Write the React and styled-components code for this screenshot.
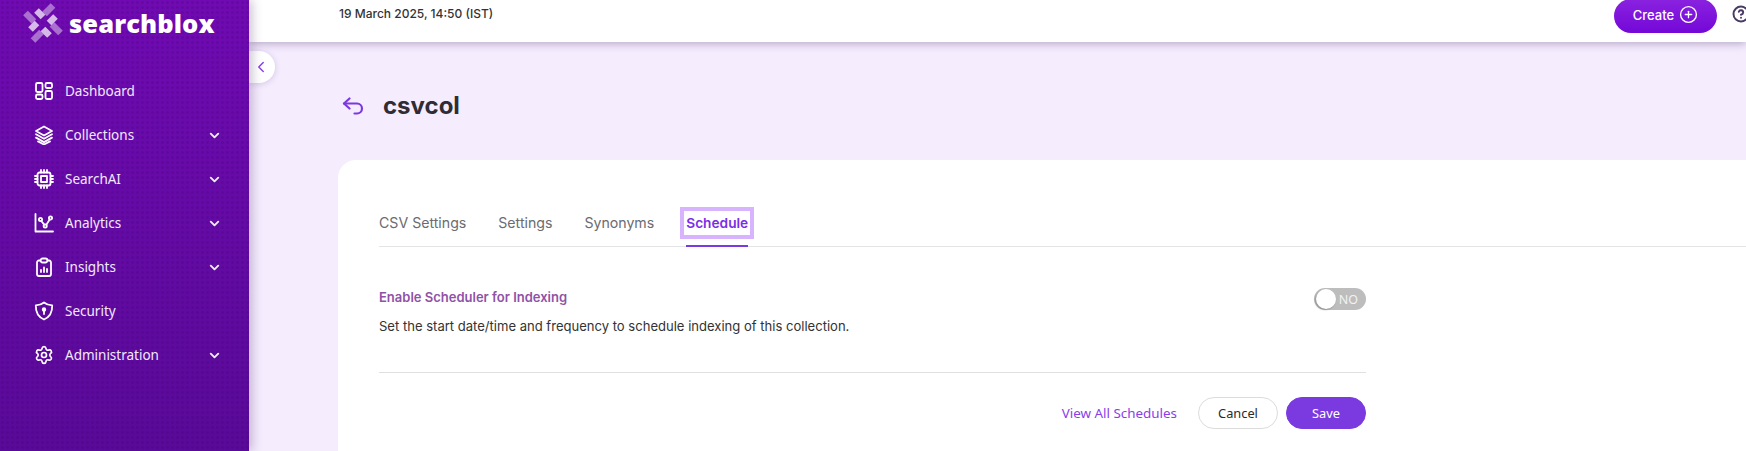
import React from 'react';
import styled, { createGlobalStyle } from 'styled-components';
import { ChevronDown, ChevronLeft, CirclePlus, CircleHelp, Settings } from 'lucide-react';

const Global = createGlobalStyle`
  html, body { margin: 0; padding: 0; height: 451px; overflow: hidden; background: #f5ecfe; }
  #root { height: 451px; }
  * { box-sizing: border-box; }
`;

const Shell = styled.div`
  display: flex;
  width: 1746px;
  height: 451px;
  overflow: hidden;
  font-family: Inter, "Liberation Sans", sans-serif;
`;

const Sidebar = styled.aside`
  position: relative;
  z-index: 3;
  flex: 0 0 249px;
  background-color: #650aa6;
  background-image:
    radial-gradient(circle at center, rgba(60, 0, 110, 0.2) 1.2px, transparent 1.6px),
    linear-gradient(180deg, #700ab2 0%, #590a98 100%);
  background-size: 5px 5px, 100% 100%;
  box-shadow: 3px 0 10px rgba(60, 30, 90, 0.28);
`;

const Brand = styled.div`
  display: flex;
  align-items: center;
  gap: 6px;
  height: 46px;
  padding-left: 23px;
`;

const BrandName = styled.span`
  font-family: "Open Sans", sans-serif;
  font-weight: 800;
  font-size: 25.5px;
  letter-spacing: 0.1px;
  line-height: 44px;
  color: #fff;
`;

const NavList = styled.nav`
  display: flex;
  flex-direction: column;
  padding-top: 23px;
`;

const NavRow = styled.div`
  display: flex;
  align-items: center;
  height: 44px;
  padding: 0 27px 0 34px;
  color: #fff;
`;

const NavIcon = styled.svg`
  flex: 0 0 20px;
  width: 20px;
  height: 20px;
  fill: none;
  stroke: #fff;
  stroke-width: 1.8;
  stroke-linecap: round;
  stroke-linejoin: round;
`;

const NavLabel = styled.span`
  flex: 1;
  margin-left: 11px;
  font-family: "Noto Sans", sans-serif;
  font-size: 13.5px;
  line-height: 20px;
  color: #f3e9fc;
`;

const Main = styled.div`
  flex: 1;
  min-width: 0;
  display: flex;
  flex-direction: column;
  position: relative;
`;

const Header = styled.header`
  position: relative;
  z-index: 2;
  flex: 0 0 42px;
  display: flex;
  align-items: flex-start;
  background: #fff;
  padding-left: 90px;
  box-shadow: 0 2px 8px rgba(70, 50, 100, 0.35);
`;

const DateText = styled.span`
  margin-top: 6px;
  font-size: 12px;
  font-weight: 500;
  line-height: 16px;
  color: #333;
`;

const HeaderActions = styled.div`
  margin-left: auto;
  margin-right: -4px;
  display: flex;
  align-items: flex-start;
  gap: 15px;
`;

const CreateButton = styled.button`
  display: flex;
  align-items: center;
  justify-content: center;
  gap: 5px;
  width: 103px;
  height: 34px;
  margin-top: -1px;
  border: 0;
  padding: 0 0 3px;
  border-radius: 17px;
  background: linear-gradient(180deg, #8a22df 0%, #7408d8 100%);
  color: #fff;
  font-family: Inter, sans-serif;
  font-size: 13px;
  font-weight: 500;
`;

const HelpSlot = styled.span`
  display: flex;
  margin-top: 5px;
  color: #4a3a66;
`;

const CollapseTab = styled.button`
  position: absolute;
  z-index: 1;
  left: 0;
  top: 51px;
  width: 26px;
  height: 32px;
  display: flex;
  align-items: center;
  justify-content: center;
  padding: 0 3px 0 0;
  border: 0;
  border-radius: 0 16px 16px 0;
  background: #fff;
  color: #8a3ee8;
  box-shadow: 0 1px 6px rgba(80, 50, 120, 0.2);
`;

const Content = styled.main`
  flex: 1;
  display: flex;
  flex-direction: column;
  padding-left: 89px;
`;

const TitleRow = styled.div`
  flex: 0 0 118px;
  display: flex;
  align-items: center;
  gap: 19px;
  padding: 10px 0 0 4px;
`;

const BackIcon = styled.svg`
  width: 22px;
  height: 18px;
  fill: none;
  stroke: #7b3ae0;
  stroke-width: 2.2;
  stroke-linecap: round;
  stroke-linejoin: round;
`;

const Title = styled.h1`
  margin: 0;
  font-size: 24px;
  font-weight: 700;
  line-height: 30px;
  color: #2f2d33;
`;

const Card = styled.section`
  flex: 1;
  margin-right: -40px;
  padding: 47px 0 0 41px;
  background: #fff;
  border-radius: 18px 0 0 0;
`;

const Tabs = styled.div`
  display: flex;
  gap: 32px;
  height: 40px;
  border-bottom: 1px solid #e4e4e6;
`;

const Tab = styled.button`
  display: flex;
  align-items: flex-start;
  height: 40px;
  padding: 6px 0 0;
  border: 0;
  border-bottom: 2px solid ${p => (p.$active ? '#7b3ae0' : 'transparent')};
  background: none;
  font-family: Inter, sans-serif;
  font-size: ${p => (p.$active ? '13.7px' : '14.15px')};
  font-weight: ${p => (p.$active ? 600 : 400)};
  color: ${p => (p.$active ? '#7b2fe6' : '#6b6b70')};
`;

const TabLabel = styled.span`
  display: block;
  height: 20px;
  line-height: 20px;
  outline: ${p => (p.$focus ? '4px solid #d8b4fe' : 'none')};
  outline-offset: 2px;
`;

const Panel = styled.div`
  width: 987px;
`;

const SettingRow = styled.div`
  display: flex;
  justify-content: space-between;
  align-items: flex-start;
  padding-top: 41px;
  height: 126px;
  border-bottom: 1px solid #e0e0e0;
`;

const SettingText = styled.div`
  display: flex;
  flex-direction: column;
  gap: 13px;
  padding-top: 1px;
`;

const SettingTitle = styled.div`
  font-size: 13px;
  font-weight: 600;
  line-height: 16px;
  color: #8f52a6;
`;

const SettingDesc = styled.div`
  font-size: 13.05px;
  line-height: 16px;
  color: #333;
`;

const Toggle = styled.div`
  position: relative;
  width: 52px;
  height: 22px;
  border-radius: 11px;
  background: #bdbdbd;
  display: flex;
  align-items: center;
  justify-content: flex-end;
  padding-right: 8px;
  font-family: "Noto Sans", sans-serif;
  font-size: 12.5px;
  color: #f2f2f2;
`;

const Knob = styled.span`
  position: absolute;
  left: 2px;
  top: 1px;
  width: 20px;
  height: 20px;
  border-radius: 50%;
  background: #fff;
  box-shadow: -1px 1px 2px rgba(0, 0, 0, 0.25);
`;

const Actions = styled.div`
  display: flex;
  justify-content: flex-end;
  align-items: center;
  gap: 8px;
  padding-top: 24px;
`;

const ViewAll = styled.a`
  margin-right: 13px;
  font-family: "Noto Sans", sans-serif;
  font-size: 13.4px;
  color: #8a3ee8;
`;

const PillButton = styled.button`
  width: 80px;
  height: 32px;
  border-radius: 16px;
  border: 1px solid ${p => (p.$primary ? '#7b3ae0' : '#dcdcdc')};
  background: ${p => (p.$primary ? '#7b3ae0' : '#fff')};
  color: ${p => (p.$primary ? '#fff' : '#2a2a2a')};
  font-family: "Noto Sans", sans-serif;
  font-size: 12.8px;
  padding: 0;
`;

const Logo = () => (
  <svg width="40" height="40" viewBox="0 0 40 40" fill="none" strokeWidth="6.5">
    {[0, 90, 180, 270].map(a => (
      <g key={a} transform={`rotate(${a} 20 20)`}>
        <path d="M13.5 7.500 20 14" stroke="#fff" strokeOpacity="0.72" />
        <path d="M30 2.500 21.500 11" stroke="#fff" strokeOpacity="0.42" />
      </g>
    ))}
  </svg>
);

const BackArrow = () => (
  <BackIcon viewBox="0 0 22 18">
    <path d="M7.500 1.500 2 6.500l5.500 5" />
    <path d="M2 6.500h13a5 5 0 0 1 0 10h-2.500" />
  </BackIcon>
);

const icons = {
  dashboard: (
    <>
      <rect x="2" y="2" width="6.500" height="9" rx="1.500" />
      <rect x="11.500" y="2" width="6.500" height="5" rx="1.500" />
      <rect x="2" y="13.500" width="6.500" height="4.500" rx="1.500" />
      <rect x="11.500" y="10" width="6.500" height="8" rx="1.500" />
    </>
  ),
  layers: (
    <>
      <path d="M10 1.500 18 6l-8 4.500L2 6z" />
      <path d="M2 9.300 10 13.800l8-4.500" />
      <path d="M2 12.600 10 17.100l8-4.500" />
      <path d="M4 16.400 10 19.500l6-3.100" />
    </>
  ),
  chip: (
    <>
      <rect x="3.500" y="3.500" width="13" height="13" rx="2" />
      <rect x="7" y="7" width="6" height="6" />
      <path d="M7 1v2.500M10 1v2.500M13 1v2.500M7 16.500V19M10 16.500V19M13 16.500V19M1 7h2.500M1 10h2.500M1 13h2.500M16.500 7H19M16.500 10H19M16.500 13H19" />
    </>
  ),
  chart: (
    <>
      <path d="M1.500 1v17.500H19" />
      <path d="M7.300 8 10.200 11.600M12.300 11.700 15.700 6.600" />
      <circle cx="6.500" cy="6.500" r="1.600" />
      <circle cx="11.200" cy="13" r="1.600" />
      <circle cx="16.500" cy="5" r="1.600" />
    </>
  ),
  clipboard: (
    <>
      <path d="M6.500 3.500H5a2 2 0 0 0-2 2V17a2 2 0 0 0 2 2h10a2 2 0 0 0 2-2V5.500a2 2 0 0 0-2-2h-1.500" />
      <rect x="6.500" y="1.500" width="7" height="4" rx="2" />
      <path d="M7 15v-2M10 15v-4.500M13 15v-3" />
    </>
  ),
  shield: (
    <>
      <path d="M10 1.500c2.500 2 5 2.700 8.200 2.800.2 6.700-1.800 11.500-8.200 14.200C3.600 15.800 1.600 11 1.800 4.300 5 4.200 7.500 3.500 10 1.500z" />
      <circle cx="10" cy="8.500" r="1.300" fill="#fff" />
      <path d="M10 9.500v3.500" />
    </>
  ),
};

const navItems = [
  { label: 'Dashboard', icon: 'dashboard' },
  { label: 'Collections', icon: 'layers', more: true },
  { label: 'SearchAI', icon: 'chip', more: true },
  { label: 'Analytics', icon: 'chart', more: true },
  { label: 'Insights', icon: 'clipboard', more: true },
  { label: 'Security', icon: 'shield' },
  { label: 'Administration', icon: 'gear', more: true },
];

export default function App() {
  return (
    <Shell>
      <Global />
      <Sidebar>
        <Brand>
          <Logo />
          <BrandName>searchblox</BrandName>
        </Brand>
        <NavList>
          {navItems.map(item => (
            <NavRow key={item.label}>
              {item.icon === 'gear'
                ? <Settings size={20} strokeWidth={2} />
                : <NavIcon viewBox="0 0 20 20">{icons[item.icon]}</NavIcon>}
              <NavLabel>{item.label}</NavLabel>
              {item.more && <ChevronDown size={15} strokeWidth={3} color="#f3e9fc" />}
            </NavRow>
          ))}
        </NavList>
      </Sidebar>
      <Main>
        <Header>
          <DateText>19 March 2025, 14:50 (IST)</DateText>
          <HeaderActions>
            <CreateButton>
              Create <CirclePlus size={19} strokeWidth={1.7} />
            </CreateButton>
            <HelpSlot><CircleHelp size={18} strokeWidth={2.6} /></HelpSlot>
          </HeaderActions>
        </Header>
        <CollapseTab><ChevronLeft size={18} strokeWidth={1.9} /></CollapseTab>
        <Content>
          <TitleRow>
            <BackArrow />
            <Title>csvcol</Title>
          </TitleRow>
          <Card>
            <Tabs>
              <Tab><TabLabel>CSV Settings</TabLabel></Tab>
              <Tab><TabLabel>Settings</TabLabel></Tab>
              <Tab><TabLabel>Synonyms</TabLabel></Tab>
              <Tab $active><TabLabel $focus>Schedule</TabLabel></Tab>
            </Tabs>
            <Panel>
              <SettingRow>
                <SettingText>
                  <SettingTitle>Enable Scheduler for Indexing</SettingTitle>
                  <SettingDesc>Set the start date/time and frequency to schedule indexing of this collection.</SettingDesc>
                </SettingText>
                <Toggle><Knob />NO</Toggle>
              </SettingRow>
              <Actions>
                <ViewAll>View All Schedules</ViewAll>
                <PillButton>Cancel</PillButton>
                <PillButton $primary>Save</PillButton>
              </Actions>
            </Panel>
          </Card>
        </Content>
      </Main>
    </Shell>
  );
}
